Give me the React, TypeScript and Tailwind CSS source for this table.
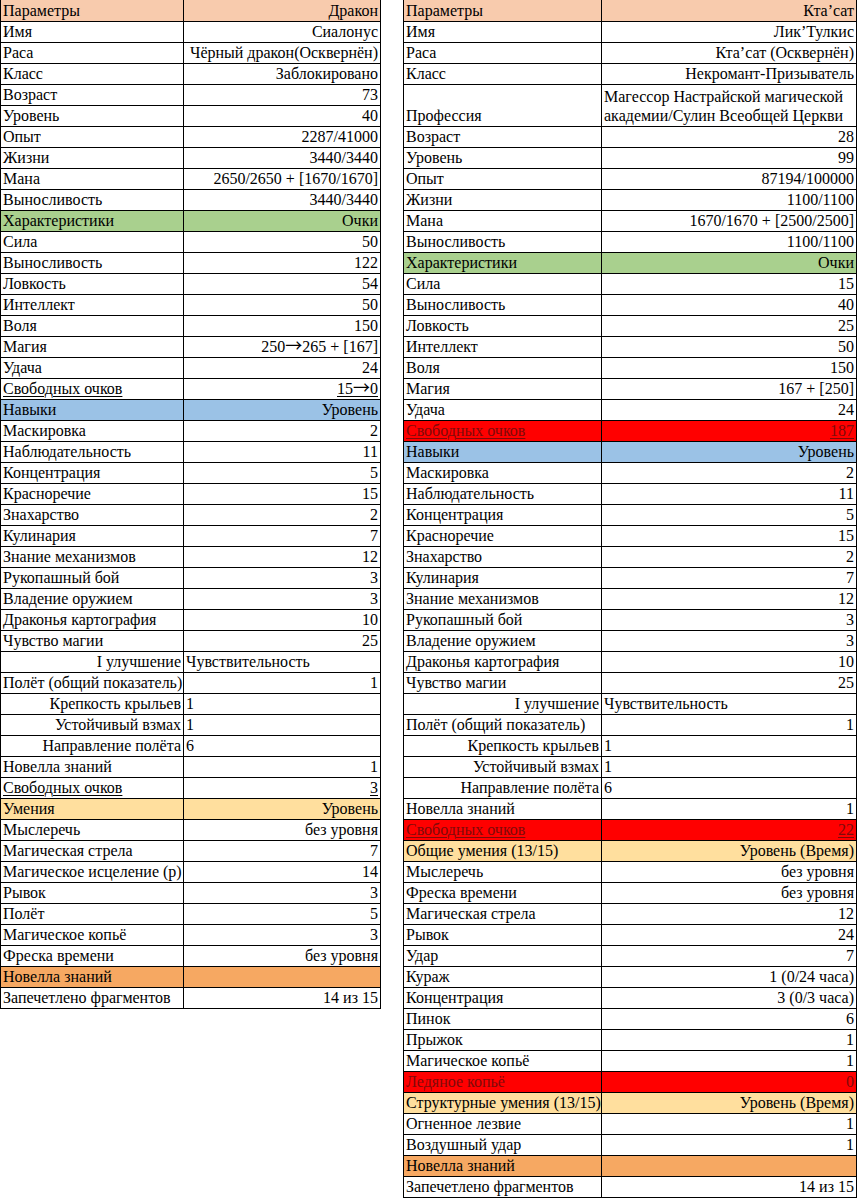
import React from "react";

type Row = {
  l: string;
  v?: string;
  bg?: string;
  la?: "left" | "right";
  va?: "left" | "right";
  u?: boolean;
  red?: boolean;
  tall?: boolean;
  v2?: string;
};

const PEACH = "bg-[#f8cbad]";
const GREEN = "bg-[#a9d08e]";
const BLUE = "bg-[#9bc2e6]";
const GOLD = "bg-[#ffdf9e]";
const ORANGE = "bg-[#f6a862]";
const RED = "bg-[#ff0000]";

const leftRows: Row[] = [
  { l: "Параметры", v: "Дракон", bg: PEACH },
  { l: "Имя", v: "Сиалонус" },
  { l: "Раса", v: "Чёрный дракон(Осквернён)" },
  { l: "Класс", v: "Заблокировано" },
  { l: "Возраст", v: "73" },
  { l: "Уровень", v: "40" },
  { l: "Опыт", v: "2287/41000" },
  { l: "Жизни", v: "3440/3440" },
  { l: "Мана", v: "2650/2650 + [1670/1670]" },
  { l: "Выносливость", v: "3440/3440" },
  { l: "Характеристики", v: "Очки", bg: GREEN },
  { l: "Сила", v: "50" },
  { l: "Выносливость", v: "122" },
  { l: "Ловкость", v: "54" },
  { l: "Интеллект", v: "50" },
  { l: "Воля", v: "150" },
  { l: "Магия", v: "250→265 + [167]" },
  { l: "Удача", v: "24" },
  { l: "Свободных очков", v: "15→0", u: true },
  { l: "Навыки", v: "Уровень", bg: BLUE },
  { l: "Маскировка", v: "2" },
  { l: "Наблюдательность", v: "11" },
  { l: "Концентрация", v: "5" },
  { l: "Красноречие", v: "15" },
  { l: "Знахарство", v: "2" },
  { l: "Кулинария", v: "7" },
  { l: "Знание механизмов", v: "12" },
  { l: "Рукопашный бой", v: "3" },
  { l: "Владение оружием", v: "3" },
  { l: "Драконья картография", v: "10" },
  { l: "Чувство магии", v: "25" },
  { l: "I улучшение", v: "Чувствительность", la: "right", va: "left" },
  { l: "Полёт (общий показатель)", v: "1" },
  { l: "Крепкость крыльев", v: "1", la: "right", va: "left" },
  { l: "Устойчивый взмах", v: "1", la: "right", va: "left" },
  { l: "Направление полёта", v: "6", la: "right", va: "left" },
  { l: "Новелла знаний", v: "1" },
  { l: "Свободных очков", v: "3", u: true },
  { l: "Умения", v: "Уровень", bg: GOLD },
  { l: "Мыслеречь", v: "без уровня" },
  { l: "Магическая стрела", v: "7" },
  { l: "Магическое исцеление (р)", v: "14" },
  { l: "Рывок", v: "3" },
  { l: "Полёт", v: "5" },
  { l: "Магическое копьё", v: "3" },
  { l: "Фреска времени", v: "без уровня" },
  { l: "Новелла знаний", v: "", bg: ORANGE },
  { l: "Запечетлено фрагментов", v: "14 из 15" },
];

const rightRows: Row[] = [
  { l: "Параметры", v: "Кта’сат", bg: PEACH },
  { l: "Имя", v: "Лик’Тулкис" },
  { l: "Раса", v: "Кта’сат (Осквернён)" },
  { l: "Класс", v: "Некромант-Призыватель" },
  {
    l: "Профессия",
    v: "Магессор Настрайской магической",
    v2: "академии/Сулин Всеобщей Церкви",
    va: "left",
    tall: true,
  },
  { l: "Возраст", v: "28" },
  { l: "Уровень", v: "99" },
  { l: "Опыт", v: "87194/100000" },
  { l: "Жизни", v: "1100/1100" },
  { l: "Мана", v: "1670/1670 + [2500/2500]" },
  { l: "Выносливость", v: "1100/1100" },
  { l: "Характеристики", v: "Очки", bg: GREEN },
  { l: "Сила", v: "15" },
  { l: "Выносливость", v: "40" },
  { l: "Ловкость", v: "25" },
  { l: "Интеллект", v: "50" },
  { l: "Воля", v: "150" },
  { l: "Магия", v: "167 + [250]" },
  { l: "Удача", v: "24" },
  { l: "Свободных очков", v: "187", bg: RED, u: true, red: true },
  { l: "Навыки", v: "Уровень", bg: BLUE },
  { l: "Маскировка", v: "2" },
  { l: "Наблюдательность", v: "11" },
  { l: "Концентрация", v: "5" },
  { l: "Красноречие", v: "15" },
  { l: "Знахарство", v: "2" },
  { l: "Кулинария", v: "7" },
  { l: "Знание механизмов", v: "12" },
  { l: "Рукопашный бой", v: "3" },
  { l: "Владение оружием", v: "3" },
  { l: "Драконья картография", v: "10" },
  { l: "Чувство магии", v: "25" },
  { l: "I улучшение", v: "Чувствительность", la: "right", va: "left" },
  { l: "Полёт (общий показатель)", v: "1" },
  { l: "Крепкость крыльев", v: "1", la: "right", va: "left" },
  { l: "Устойчивый взмах", v: "1", la: "right", va: "left" },
  { l: "Направление полёта", v: "6", la: "right", va: "left" },
  { l: "Новелла знаний", v: "1" },
  { l: "Свободных очков", v: "22", bg: RED, u: true, red: true },
  { l: "Общие умения (13/15)", v: "Уровень (Время)", bg: GOLD },
  { l: "Мыслеречь", v: "без уровня" },
  { l: "Фреска времени", v: "без уровня" },
  { l: "Магическая стрела", v: "12" },
  { l: "Рывок", v: "24" },
  { l: "Удар", v: "7" },
  { l: "Кураж", v: "1 (0/24 часа)" },
  { l: "Концентрация", v: "3 (0/3 часа)" },
  { l: "Пинок", v: "6" },
  { l: "Прыжок", v: "1" },
  { l: "Магическое копьё", v: "1" },
  { l: "Ледяное копьё", v: "0", bg: RED, red: true },
  { l: "Структурные умения (13/15)", v: "Уровень (Время)", bg: GOLD },
  { l: "Огненное лезвие", v: "1" },
  { l: "Воздушный удар", v: "1" },
  { l: "Новелла знаний", v: "", bg: ORANGE },
  { l: "Запечетлено фрагментов", v: "14 из 15" },
];

function WithArrows({ text }: { text: string }) {
  const parts = text.split("→");
  return (
    <>
      {parts.map((p, i) => (
        <React.Fragment key={i}>
          {i > 0 && (
            <span className="font-['Noto_Sans_CJK_SC',sans-serif] text-[17px] leading-[18px]">
              →
            </span>
          )}
          {p}
        </React.Fragment>
      ))}
    </>
  );
}

function Table({
  rows,
  c1,
  c2,
}: {
  rows: Row[];
  c1: string;
  c2: string;
}) {
  return (
    <div className="flex flex-col border-l border-black">
      {rows.map((r, i) => {
        const h = i === 0 ? "h-[22px]" : r.tall ? "h-[42px]" : "h-[21px]";
        const txt = r.red ? "text-[#7e0a0a]" : "text-black";
        const und = r.u ? "underline underline-offset-2 decoration-1" : "";
        return (
          <div key={i} className={`flex ${h} ${r.bg ?? "bg-white"} ${txt}`}>
            <div
              className={`${c1} shrink-0 border-r border-b border-black flex items-end pb-[1px] px-[2px] ${
                r.la === "right" ? "justify-end" : "justify-start"
              }`}
            >
              <span className={`whitespace-nowrap ${und}`}>{r.l}</span>
            </div>
            <div
              className={`${c2} shrink-0 border-r border-b border-black flex flex-col justify-end pb-[1px] px-[2px] ${
                r.va === "left" ? "items-start" : "items-end"
              }`}
            >
              {r.v2 ? (
                <>
                  <span className="whitespace-nowrap leading-[21px]">{r.v}</span>
                  <span className="whitespace-nowrap">{r.v2}</span>
                </>
              ) : (
                <span className={`whitespace-nowrap ${und}`}>
                  <WithArrows text={r.v ?? ""} />
                </span>
              )}
            </div>
          </div>
        );
      })}
    </div>
  );
}

export default function App() {
  return (
    <div className="w-[857px] h-[1198px] bg-white flex items-start gap-[22px] text-[16px] leading-[18px] overflow-hidden font-['Liberation_Serif','DejaVu_Serif',serif]">
      <Table rows={leftRows} c1="w-[183px]" c2="w-[197px]" />
      <Table rows={rightRows} c1="w-[198px]" c2="w-[255px]" />
    </div>
  );
}
